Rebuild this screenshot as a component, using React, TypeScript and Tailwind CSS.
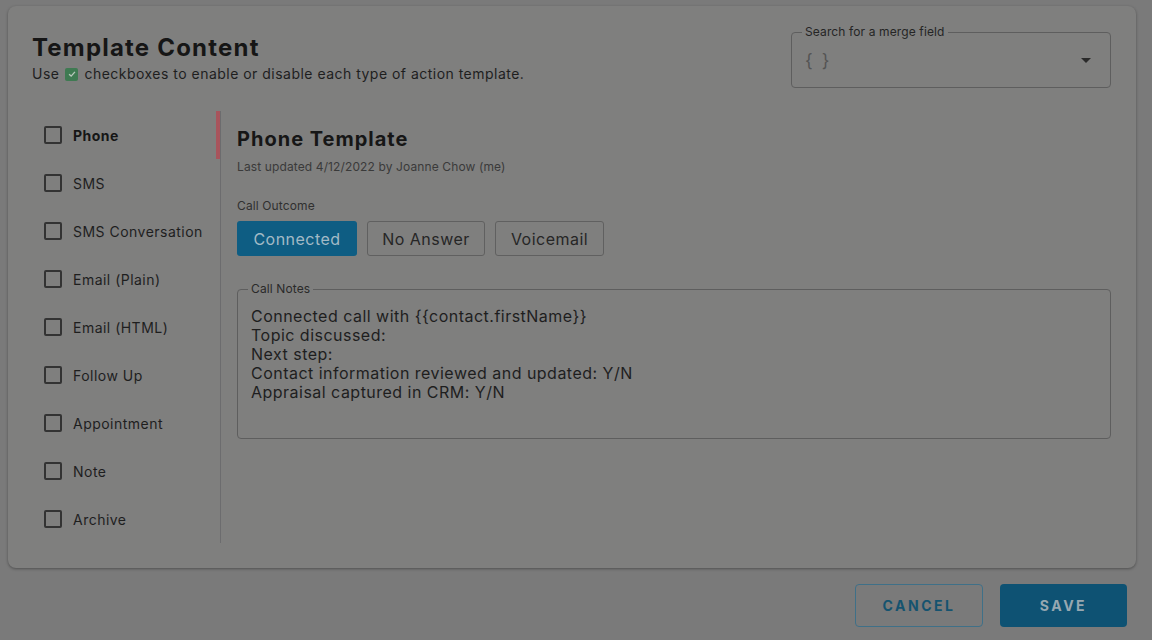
import React from "react";

const items = [
  "Phone",
  "SMS",
  "SMS Conversation",
  "Email (Plain)",
  "Email (HTML)",
  "Follow Up",
  "Appointment",
  "Note",
  "Archive",
];

const notes = [
  "Connected call with {{contact.firstName}}",
  "Topic discussed:",
  "Next step:",
  "Contact information reviewed and updated: Y/N",
  "Appraisal captured in CRM: Y/N",
];

export default function App() {
  return (
    <div
      className="w-[1152px] h-[640px] bg-[#7a7a7a] flex flex-col overflow-hidden tracking-[0.03em]"
      style={{ fontFamily: "Inter, 'Noto Sans', sans-serif" }}
    >
      <div className="ml-2 mr-4 mt-[6px] h-[562px] rounded-lg bg-[#7f7f7e] shadow-[0_1px_3px_rgba(0,0,0,0.35)] flex flex-col pl-6 pr-[25px]">
        {/* header */}
        <div className="flex justify-between items-start pt-[20px]">
          <div className="pt-[6px]">
            <h1 className="text-[24px] leading-[32px] font-bold text-[#161616] tracking-[0.05em]">Template Content</h1>
            <p className="text-[14px] leading-[20px] text-[#1e1e1e] flex items-center">
              Use
              <span className="mx-[6px] inline-flex items-center justify-center w-[13px] h-[13px] rounded-[2px] bg-[#3f7a52]">
                <svg viewBox="0 0 12 12" className="w-[10px] h-[10px]">
                  <path d="M2.5 6.2 L5 8.5 L9.5 3.5" fill="none" stroke="#b9c8bd" strokeWidth="1.6" />
                </svg>
              </span>
              checkboxes to enable or disable each type of action template.
            </p>
          </div>
          <fieldset className="w-[320px] h-[62px] border border-[#5e5e5e] rounded-[4px] px-[10px] relative">
            <legend className="text-[12px] leading-[12px] text-[#252525] px-[3px] tracking-[0.01em]">Search for a merge field</legend>
            <div className="flex items-center justify-between h-[44px] pl-[3px] pr-[9px]">
              <span className="text-[18px] text-[#545454] tracking-[2px]">{"{ }"}</span>
              <svg viewBox="0 0 10 5" className="w-[10px] h-[5px]">
                <path d="M0 0 L10 0 L5 5 Z" fill="#2a2a2a" />
              </svg>
            </div>
          </fieldset>
        </div>

        {/* body */}
        <div className="flex mt-[23px]">
          <div className="w-[189px] border-r border-[#6c6c6e] flex flex-col">
            {items.map((it, i) => (
              <div key={it} className="h-[48px] flex items-center pl-[12px] relative">
                <span className="w-[18px] h-[18px] border-2 border-[#333333] rounded-[2px]" />
                <span
                  className={
                    "ml-[11px] text-[14px] " +
                    (i === 0 ? "font-bold text-[#161616]" : "text-[#1e1e1e]")
                  }
                >
                  {it}
                </span>
                {i === 0 && <span className="absolute right-0 top-0 w-[4px] h-[48px] bg-[#a8545c]" />}
              </div>
            ))}
          </div>

          <div className="flex-1 pl-4 pt-[14px]">
            <h2 className="text-[20px] leading-[28px] font-bold text-[#161616] tracking-[0.05em]">Phone Template</h2>
            <p className="text-[12px] leading-[16px] text-[#3a3a3a] mt-[6px] tracking-[0.01em]">Last updated 4/12/2022 by Joanne Chow (me)</p>
            <p className="text-[12px] leading-[16px] text-[#303030] mt-[23px] tracking-[0.01em]">Call Outcome</p>
            <div className="flex gap-[10px] mt-[7px]">
              <button className="h-[35px] w-[120px] rounded-[3px] bg-[#0e5d83] text-[#a3bac6] text-[16px]">Connected</button>
              <button className="h-[35px] w-[118px] rounded-[3px] border border-[#606060] text-[#262626] text-[16px]">No Answer</button>
              <button className="h-[35px] w-[109px] rounded-[3px] border border-[#606060] text-[#262626] text-[16px]">Voicemail</button>
            </div>
            <fieldset className="mt-[27px] h-[156px] border border-[#5e5e5e] rounded-[4px] px-[10px]">
              <legend className="text-[12px] leading-[12px] text-[#2a2a2a] px-[3px] tracking-[0.01em]">Call Notes</legend>
              <div className="pt-[12px] pl-[3px] text-[16px] leading-[19px] text-[#1e1e1e]">
                {notes.map((n) => (
                  <div key={n}>{n}</div>
                ))}
              </div>
            </fieldset>
          </div>
        </div>
      </div>

      {/* footer */}
      <div className="flex justify-end gap-[17px] pr-[25px] mt-[16px]">
        <button className="w-[128px] h-[43px] rounded-[4px] border border-[#3f7088] text-[#15536f] text-[14px] font-bold tracking-[2.5px]">
          CANCEL
        </button>
        <button className="w-[127px] h-[43px] rounded-[4px] bg-[#0e5273] text-[#98a8b1] text-[14px] font-bold tracking-[2.5px]">
          SAVE
        </button>
      </div>
    </div>
  );
}
